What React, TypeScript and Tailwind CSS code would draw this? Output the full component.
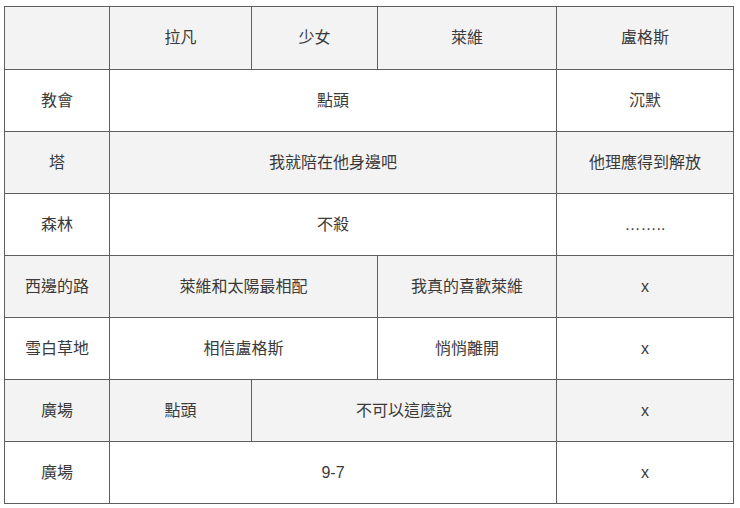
type Cell = { text: string; span?: number };

const header = ['', '拉凡', '少女', '萊維', '盧格斯'];

const rows: Cell[][] = [
  [{ text: '教會' }, { text: '點頭', span: 3 }, { text: '沉默' }],
  [{ text: '塔' }, { text: '我就陪在他身邊吧', span: 3 }, { text: '他理應得到解放' }],
  [{ text: '森林' }, { text: '不殺', span: 3 }, { text: '……..' }],
  [{ text: '西邊的路' }, { text: '萊維和太陽最相配', span: 2 }, { text: '我真的喜歡萊維' }, { text: 'x' }],
  [{ text: '雪白草地' }, { text: '相信盧格斯', span: 2 }, { text: '悄悄離開' }, { text: 'x' }],
  [{ text: '廣場' }, { text: '點頭' }, { text: '不可以這麼說', span: 2 }, { text: 'x' }],
  [{ text: '廣場' }, { text: '9-7', span: 3 }, { text: 'x' }],
];

export default function App() {
  return (
    <div
      className="min-h-[508px] w-[740px] bg-white pl-[4px] pt-[6px] text-[16px] text-[#3a3a3a]"
      style={{ fontFamily: '"Liberation Sans", "Noto Sans CJK TC", sans-serif' }}
    >
      <table className="w-[729px] table-fixed border-collapse">
        <colgroup>
          <col className="w-[105px]" />
          <col className="w-[142px]" />
          <col className="w-[126px]" />
          <col className="w-[179px]" />
          <col className="w-[177px]" />
        </colgroup>
        <thead>
          <tr className="h-[63px] bg-[#f3f3f3]">
            {header.map((h, i) => (
              <th key={i} className="border border-[#5f5f5f] text-center font-normal">
                {h}
              </th>
            ))}
          </tr>
        </thead>
        <tbody>
          {rows.map((row, r) => (
            <tr key={r} className={r % 2 === 1 ? 'h-[62px] bg-[#f3f3f3]' : 'h-[62px] bg-white'}>
              {row.map((c, i) => (
                <td key={i} colSpan={c.span} className="border border-[#5f5f5f] text-center">
                  {c.text}
                </td>
              ))}
            </tr>
          ))}
        </tbody>
      </table>
    </div>
  );
}
